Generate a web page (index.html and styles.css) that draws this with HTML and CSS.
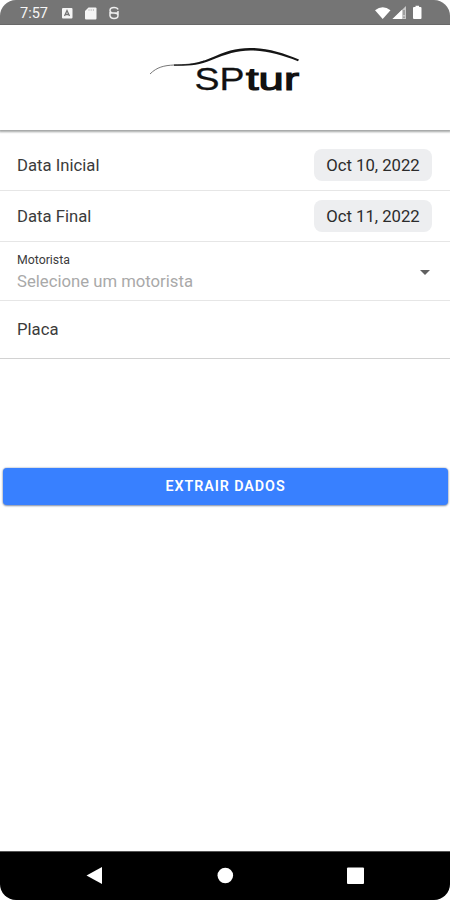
FILE: index.html
```html
<!DOCTYPE html>
<html lang="pt-BR">
<head>
<meta charset="utf-8">
<meta name="viewport" content="width=device-width, initial-scale=1">
<title>SPtur</title>
<link rel="stylesheet" href="styles.css">
</head>
<body>
<div class="screen">
  <div class="status">
    <span class="time">7:57</span>
    <svg class="status-left" width="58" height="16" viewBox="0 0 58 16">
      <rect x="1" y="3" width="10.500" height="10.500" rx="1" fill="#f5f5f5"/>
      <path d="M3.500 11 6 5.500l2.500 5.500M4.500 9.500h3" fill="none" stroke="#757575" stroke-width="1.300"/>
      <path d="M27.500 2.500H34.500a1 1 0 0 1 1 1v10a1 1 0 0 1-1 1h-9.500a1 1 0 0 1-1-1V6z" fill="#f5f5f5"/>
      <path d="M28 4v2M30.200 4v2M32.400 4v2" stroke="#bbb" stroke-width=".8"/>
      <path d="M57 4.500C56.500 2.800 55 2.500 53 2.500c-3 0-4 1-4 3s1.500 2.500 4 2.500 4 .5 4 2.500-1.500 3-4 3-3.500-.8-4-2.500M49 8h8M49 7v4M57 6v4" fill="none" stroke="#eee" stroke-width="1.500"/>
    </svg>
    <svg class="status-right" width="50" height="16" viewBox="0 0 50 16">
      <path d="M0 5.300Q7.700-.8 15.500 5.300L7.700 14z" fill="#fff"/>
      <path d="M17.500 14 31 1v13z" fill="#c8c8c8"/>
      <path d="M17.500 14 27 4.800V14z" fill="#fff"/>
      <path d="M29 5v5M29 11.500v1.500" stroke="#777" stroke-width="1"/>
      <path d="M40.500 2V.8h3.600V2h1.400a1 1 0 0 1 1 1v10a1 1 0 0 1-1 1h-6.500a1 1 0 0 1-1-1V3a1 1 0 0 1 1-1z" fill="#fff"/>
    </svg>
  </div>
  <header class="header">
    <svg class="logo" width="160" height="60" viewBox="145 40 160 60" role="img" aria-label="SPtur">
      <path d="M150 74C157 67 164 65.500 174 65C184 64.500 194 64.500 204 61" fill="none" stroke="#777" stroke-width="1"/>
      <path d="M174 64.600C190 64.500 198 63.200 210 58.200C226 51.200 236 47.700 251 47.900C268 48.100 283 53 299 59.500L298 61.200C282 55.200 268 50.800 251 50.500C237 50.400 227 53.800 211 60.300C199 65.200 190 65.900 174 65.700Z" fill="#151515"/>
      <text x="194.500" y="89.500" class="logo-light" textLength="50" lengthAdjust="spacingAndGlyphs">SP</text>
      <text x="246" y="89.500" class="logo-bold" textLength="53" lengthAdjust="spacingAndGlyphs">tur</text>
    </svg>
  </header>
  <main class="content">
    <div class="row"><span>Data Inicial</span><button class="date">Oct 10, 2022</button></div>
    <div class="row"><span>Data Final</span><button class="date">Oct 11, 2022</button></div>
    <div class="row select">
      <div class="field"><span class="label">Motorista</span><span class="placeholder">Selecione um motorista</span></div>
      <svg class="caret" width="10" height="5" viewBox="0 0 10 5"><path d="M0 0h10L5 5z" fill="#606060"/></svg>
    </div>
    <div class="row plate"><span>Placa</span></div>
    <button class="submit">EXTRAIR DADOS</button>
  </main>
  <nav class="nav">
    <svg width="450" height="48" viewBox="0 0 450 48" fill="#fff">
      <path d="M86.500 23.500 102 15v17z"/>
      <circle cx="225.300" cy="23.500" r="7.800"/>
      <rect x="347" y="15.500" width="17" height="16.500" rx="1"/>
    </svg>
  </nav>
</div>
</body>
</html>
```
FILE: styles.css
```css
* { box-sizing: border-box; }
body { margin: 0; background: #fff; font-family: Roboto, sans-serif; }
button { border: 0; padding: 0; font-family: inherit; }
svg { display: block; flex: none; }
.screen { width: 450px; height: 900px; display: flex; flex-direction: column; overflow: hidden; border-radius: 16px; background: #fff; }
.status { height: 25px; flex: none; display: flex; align-items: center; padding: 1px 24px 0 20px; background: #757575; border-bottom: 1px solid #686868; color: #f5f5f5; }
.time { width: 41px; padding-top: 2px; font-size: 14.5px; }
.status-right { margin-left: auto; margin-right: 1px; }
.header { height: 105px; flex: none; display: flex; justify-content: center; padding-top: 15px; box-shadow: 0 1px 2px 1px #a3a6a5; clip-path: inset(0 0 -5px 0); }
.logo-light { font: 32px "Liberation Sans", sans-serif; fill: #111; stroke: #111; stroke-width: .3px; }
.logo-bold { font: 32px "Liberation Sans", sans-serif; fill: #111; stroke: #111; stroke-width: 1.2px; }
.content { flex: 1; padding-top: 10px; }
.row { height: 51px; display: flex; align-items: center; justify-content: space-between; padding: 0 18px 0 17px; border-bottom: 1px solid #e6e6e6; color: #3b3b3b; font-size: 16.7px; }
.date { width: 118px; height: 32px; border-radius: 8px; background: #edeef0; color: #2b2b2b; font-size: 16.7px; }
.select { height: 59px; padding-right: 20px; }
.field { display: flex; flex-direction: column; padding-top: 2px; }
.label { font-size: 12.3px; line-height: 17px; }
.placeholder { color: #a9a9a9; font-size: 16.7px; line-height: 24px; position: relative; top: 1px; }
.caret { margin-top: 2px; }
.plate { height: 58px; border-color: #d2d2d2; }
.submit { display: block; width: 445px; height: 37px; margin: 109px 2px 0 3px; padding-bottom: 2px; border-radius: 4px; background: #3880ff; box-shadow: 0 0 2px #8b96ac, 0 1px 2px #8b96ac; color: #fff; font-size: 14.3px; font-weight: 600; letter-spacing: .95px; }
.nav { height: 49px; flex: none; background: #000; border-top: 1px solid #555; }
```
